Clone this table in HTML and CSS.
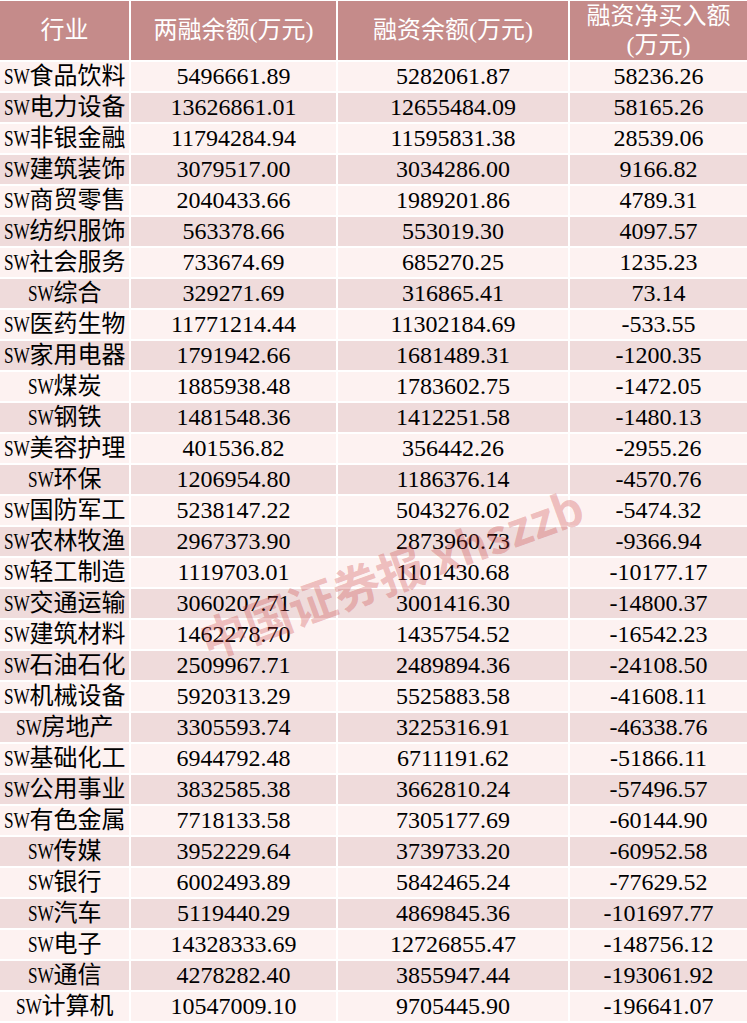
FILE: index.html
```html
<!DOCTYPE html>
<html lang="zh-CN">
<head>
<meta charset="utf-8">
<title>行业融资数据</title>
<link rel="stylesheet" href="styles.css">
</head>
<body>
<div class="sheet">
  <div class="table">
    <div class="row head">
      <div class="cell">行业</div>
      <div class="cell">两融余额(万元)</div>
      <div class="cell">融资余额(万元)</div>
      <div class="cell two">融资净买入额<br>(万元)</div>
    </div>
    <div class="row"><div class="cell"><span class="sw">SW</span>食品饮料</div><div class="cell">5496661.89</div><div class="cell">5282061.87</div><div class="cell">58236.26</div></div>
    <div class="row"><div class="cell"><span class="sw">SW</span>电力设备</div><div class="cell">13626861.01</div><div class="cell">12655484.09</div><div class="cell">58165.26</div></div>
    <div class="row"><div class="cell"><span class="sw">SW</span>非银金融</div><div class="cell">11794284.94</div><div class="cell">11595831.38</div><div class="cell">28539.06</div></div>
    <div class="row"><div class="cell"><span class="sw">SW</span>建筑装饰</div><div class="cell">3079517.00</div><div class="cell">3034286.00</div><div class="cell">9166.82</div></div>
    <div class="row"><div class="cell"><span class="sw">SW</span>商贸零售</div><div class="cell">2040433.66</div><div class="cell">1989201.86</div><div class="cell">4789.31</div></div>
    <div class="row"><div class="cell"><span class="sw">SW</span>纺织服饰</div><div class="cell">563378.66</div><div class="cell">553019.30</div><div class="cell">4097.57</div></div>
    <div class="row"><div class="cell"><span class="sw">SW</span>社会服务</div><div class="cell">733674.69</div><div class="cell">685270.25</div><div class="cell">1235.23</div></div>
    <div class="row"><div class="cell"><span class="sw">SW</span>综合</div><div class="cell">329271.69</div><div class="cell">316865.41</div><div class="cell">73.14</div></div>
    <div class="row"><div class="cell"><span class="sw">SW</span>医药生物</div><div class="cell">11771214.44</div><div class="cell">11302184.69</div><div class="cell">-533.55</div></div>
    <div class="row"><div class="cell"><span class="sw">SW</span>家用电器</div><div class="cell">1791942.66</div><div class="cell">1681489.31</div><div class="cell">-1200.35</div></div>
    <div class="row"><div class="cell"><span class="sw">SW</span>煤炭</div><div class="cell">1885938.48</div><div class="cell">1783602.75</div><div class="cell">-1472.05</div></div>
    <div class="row"><div class="cell"><span class="sw">SW</span>钢铁</div><div class="cell">1481548.36</div><div class="cell">1412251.58</div><div class="cell">-1480.13</div></div>
    <div class="row"><div class="cell"><span class="sw">SW</span>美容护理</div><div class="cell">401536.82</div><div class="cell">356442.26</div><div class="cell">-2955.26</div></div>
    <div class="row"><div class="cell"><span class="sw">SW</span>环保</div><div class="cell">1206954.80</div><div class="cell">1186376.14</div><div class="cell">-4570.76</div></div>
    <div class="row"><div class="cell"><span class="sw">SW</span>国防军工</div><div class="cell">5238147.22</div><div class="cell">5043276.02</div><div class="cell">-5474.32</div></div>
    <div class="row"><div class="cell"><span class="sw">SW</span>农林牧渔</div><div class="cell">2967373.90</div><div class="cell">2873960.73</div><div class="cell">-9366.94</div></div>
    <div class="row"><div class="cell"><span class="sw">SW</span>轻工制造</div><div class="cell">1119703.01</div><div class="cell">1101430.68</div><div class="cell">-10177.17</div></div>
    <div class="row"><div class="cell"><span class="sw">SW</span>交通运输</div><div class="cell">3060207.71</div><div class="cell">3001416.30</div><div class="cell">-14800.37</div></div>
    <div class="row"><div class="cell"><span class="sw">SW</span>建筑材料</div><div class="cell">1462278.70</div><div class="cell">1435754.52</div><div class="cell">-16542.23</div></div>
    <div class="row"><div class="cell"><span class="sw">SW</span>石油石化</div><div class="cell">2509967.71</div><div class="cell">2489894.36</div><div class="cell">-24108.50</div></div>
    <div class="row"><div class="cell"><span class="sw">SW</span>机械设备</div><div class="cell">5920313.29</div><div class="cell">5525883.58</div><div class="cell">-41608.11</div></div>
    <div class="row"><div class="cell"><span class="sw">SW</span>房地产</div><div class="cell">3305593.74</div><div class="cell">3225316.91</div><div class="cell">-46338.76</div></div>
    <div class="row"><div class="cell"><span class="sw">SW</span>基础化工</div><div class="cell">6944792.48</div><div class="cell">6711191.62</div><div class="cell">-51866.11</div></div>
    <div class="row"><div class="cell"><span class="sw">SW</span>公用事业</div><div class="cell">3832585.38</div><div class="cell">3662810.24</div><div class="cell">-57496.57</div></div>
    <div class="row"><div class="cell"><span class="sw">SW</span>有色金属</div><div class="cell">7718133.58</div><div class="cell">7305177.69</div><div class="cell">-60144.90</div></div>
    <div class="row"><div class="cell"><span class="sw">SW</span>传媒</div><div class="cell">3952229.64</div><div class="cell">3739733.20</div><div class="cell">-60952.58</div></div>
    <div class="row"><div class="cell"><span class="sw">SW</span>银行</div><div class="cell">6002493.89</div><div class="cell">5842465.24</div><div class="cell">-77629.52</div></div>
    <div class="row"><div class="cell"><span class="sw">SW</span>汽车</div><div class="cell">5119440.29</div><div class="cell">4869845.36</div><div class="cell">-101697.77</div></div>
    <div class="row"><div class="cell"><span class="sw">SW</span>电子</div><div class="cell">14328333.69</div><div class="cell">12726855.47</div><div class="cell">-148756.12</div></div>
    <div class="row"><div class="cell"><span class="sw">SW</span>通信</div><div class="cell">4278282.40</div><div class="cell">3855947.44</div><div class="cell">-193061.92</div></div>
    <div class="row"><div class="cell"><span class="sw">SW</span>计算机</div><div class="cell">10547009.10</div><div class="cell">9705445.90</div><div class="cell">-196641.07</div></div>
  </div>
  <div class="watermark">中国证券报 xhszzb</div>
</div>
</body>
</html>
```

FILE: styles.css
```css
html, body {
  margin: 0;
  padding: 0;
  background: #ffffff;
}

body {
  width: 747px;
  height: 1023px;
  overflow: hidden;
  font-family: "Liberation Serif", "Noto Sans CJK SC", serif;
  font-size: 24px;
  color: #000000;
}

.sheet {
  position: relative;
  width: 747px;
  height: 1023px;
  overflow: hidden;
}

.table {
  display: flex;
  flex-direction: column;
  gap: 2px;
  padding-top: 1px;
  background: #ffffff;
}

.row {
  display: grid;
  grid-template-columns: 129px 205px 230px 1fr;
  column-gap: 2px;
  height: 29px;
}

.row .cell {
  display: flex;
  align-items: center;
  justify-content: center;
  white-space: nowrap;
  line-height: 29px;
  background: #fdf2f1;
}

.row:nth-child(odd) .cell {
  background: #efdbdb;
}

.sw {
  display: inline-block;
  transform: scaleX(0.72);
  transform-origin: left center;
  margin-right: -10px;
}

.row.head {
  height: 59px;
}

.row.head .cell {
  background: #c58b8a;
  color: #ffffff;
  line-height: 29px;
  text-align: center;
}

.row.head .cell.two {
  padding-top: 1px;
}

.watermark {
  position: absolute;
  left: 201px;
  top: 617px;
  font-family: "Noto Sans CJK SC", "DejaVu Sans", sans-serif;
  font-weight: 700;
  font-size: 47px;
  line-height: 1;
  white-space: nowrap;
  color: rgba(200, 60, 60, 0.3);
  transform: rotate(-20deg);
  transform-origin: left center;
  pointer-events: none;
}
```
